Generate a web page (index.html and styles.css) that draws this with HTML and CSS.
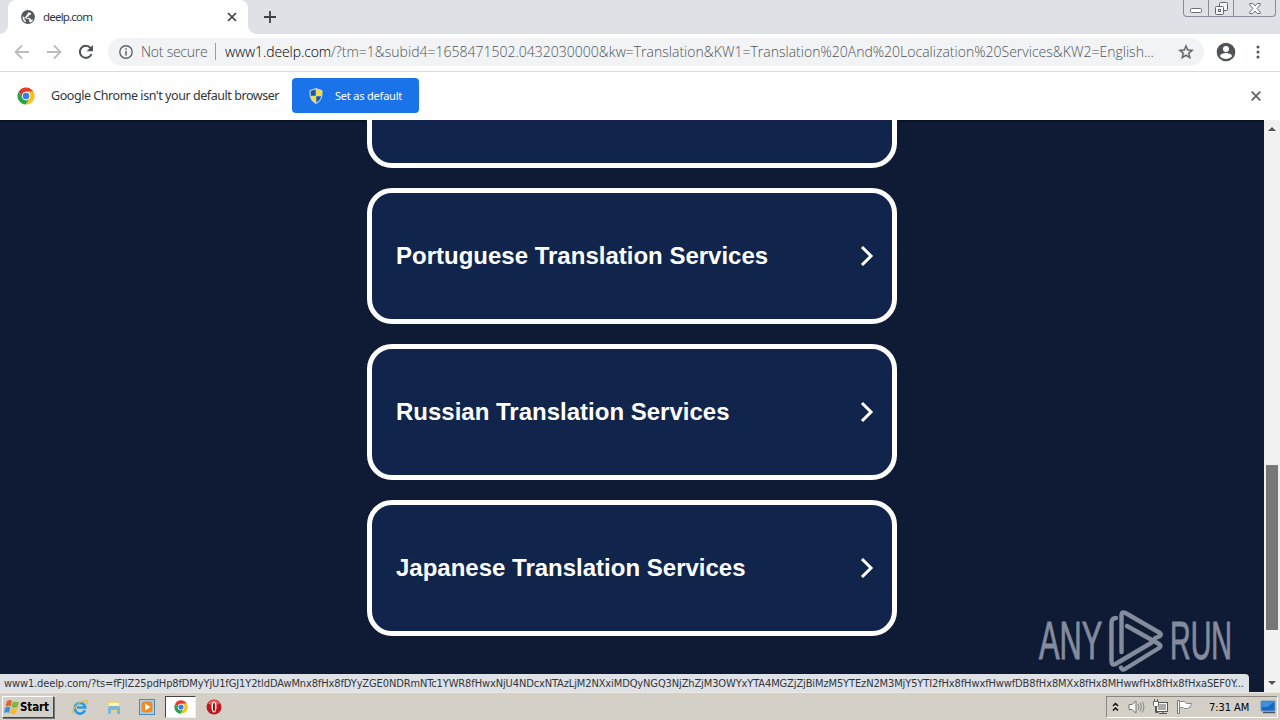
FILE: index.html
```html
<!DOCTYPE html>
<html lang="en">
<head>
    <meta charset="UTF-8">
    <meta name="viewport" content="width=device-width, initial-scale=1.0">
    <title>deelp.com</title>
    <link rel="stylesheet" href="styles.css">
</head>
<body>
<svg class="defs" width="0" height="0">
    <symbol id="chrome" viewBox="0 0 20 20">
        <circle cx="10" cy="10" r="9.5" fill="#fff"/>
        <path fill="#e33b2e" d="M1.8 5.2A9.5 9.5 0 0 1 18.3 5.4H10A4.6 4.6 0 0 0 5.8 8.3L5.9 12z"/>
        <path fill="#fbc116" d="M18.3 5.4A9.5 9.5 0 0 1 9.6 19.5L14 12.3A4.6 4.6 0 0 0 12.2 5.9V5.4z"/>
        <path fill="#2ba24c" d="M1.8 5.2A9.5 9.5 0 0 0 9.6 19.5L13.5 13A4.6 4.6 0 0 1 6 12.3z"/>
        <circle cx="10" cy="10" r="4.6" fill="#fff"/>
        <circle cx="10" cy="10" r="3.7" fill="#3b7de8"/>
    </symbol>
    <symbol id="chevron" viewBox="0 0 14 22">
        <path d="M2 2l9 9-9 9" fill="none" stroke="#fff" stroke-width="3"/>
    </symbol>
</svg>
<div class="tabstrip">
    <div class="tab">
        <svg class="favicon" viewBox="0 0 14 14"><circle cx="7" cy="7" r="6.9" fill="#55595e"/><path fill="#fff" d="M7.6 2.2l2.6 1-.4 1.6-1.8.4-.4 1.4-1.8.3.2 1.1 3.2.3 1 1.4 2-.3c-.5 1.5-1.5 2.5-3 3L8 11.2l.5-1.5L7.2 9 5 8.6 1.8 6.2l-.2 2C2 10.3 3.2 11.7 5 12.3l-.3-1.800-1.500-1.700z"/></svg>
        <span class="tab-title">deelp.com</span>
        <svg class="tab-close" viewBox="0 0 10 10"><path d="M1 1l8 8M9 1L1 9" stroke="#3c4043" stroke-width="1.7"/></svg>
    </div>
    <svg class="new-tab" viewBox="0 0 12 12"><path d="M6 0v12M0 6h12" stroke="#3c4043" stroke-width="1.8"/></svg>
    <div class="window-buttons">
        <span class="win min"><svg width="12" height="5" viewBox="0 0 12 5"><rect x=".5" y=".5" width="11" height="4" rx="1" fill="#fff" stroke="#6b6f78"/></svg></span>
        <span class="win max"><svg width="13" height="13" viewBox="0 0 13 13" fill="#f4f5f8" stroke="#60646e"><rect x="4.5" y=".5" width="8" height="8" rx="1"/><rect x=".5" y="4.5" width="8" height="8" rx="1"/><rect x="3.5" y="7.5" width="2" height="2"/></svg></span>
        <span class="win shut"><svg width="12" height="11" viewBox="0 0 12 11"><path d="M.8.5h3L6 3 8.2.5h3V2L8 5.5 11.200 9v1.500h-3L6 8l-2.200 2.500h-3V9L4 5.500.8 2z" fill="#fff" stroke="#6b6f78"/></svg></span>
    </div>
</div>
<div class="toolbar">
    <svg class="nav" viewBox="0 0 16 16"><path d="M15 8H2M8 1.5L1.5 8 8 14.5" fill="none" stroke="#babcbe" stroke-width="1.8"/></svg>
    <svg class="nav" viewBox="0 0 16 16"><path d="M1 8h13M8 1.5L14.5 8 8 14.5" fill="none" stroke="#babcbe" stroke-width="1.8"/></svg>
    <svg class="nav" viewBox="0 0 16 16"><path d="M13.5 10A6 6 0 1 1 12.5 4L14 5.8" fill="none" stroke="#505357" stroke-width="2"/><path d="M15 1v6.3H8.7z" fill="#505357"/></svg>
    <div class="omnibox">
        <svg class="info" viewBox="0 0 14 14"><circle cx="7" cy="7" r="6.2" fill="none" stroke="#5f6368" stroke-width="1.4"/><path d="M7 6v4.5M7 3.3v1.5" stroke="#5f6368" stroke-width="1.5"/></svg>
        <span class="secure">Not secure</span>
        <span class="url"><b>www1.deelp.com</b>/?tm=1&amp;subid4=1658471502.0432030000&amp;kw=Translation&amp;KW1=Translation%20And%20Localization%20Services&amp;KW2=English...</span>
        <svg class="star" viewBox="0 0 24 24"><path fill="#5f6368" stroke="#5f6368" stroke-width=".5" d="M22 9.240l-7.190-.62L12 2 9.190 8.630 2 9.240l5.460 4.730L5.820 21 12 17.270 18.180 21l-1.630-7.030L22 9.240zM12 15.400l-3.760 2.270 1-4.280-3.320-2.880 4.380-.38L12 6.100l1.710 4.040 4.380.38-3.320 2.880 1 4.280L12 15.400z"/></svg>
    </div>
    <svg class="avatar" viewBox="0 0 20 20"><circle cx="10" cy="10" r="9.3" fill="#505357"/><circle cx="10" cy="7" r="3" fill="#fff"/><path d="M4 14.200c0-2 4-3.200 6-3.200s6 1.200 6 3.200c-3 3.600-9 3.600-12 0z" fill="#fff"/></svg>
    <svg class="dots" viewBox="0 0 4 14" fill="#505357"><circle cx="2" cy="2" r="1.5"/><circle cx="2" cy="7" r="1.5"/><circle cx="2" cy="12" r="1.5"/></svg>
</div>
<div class="infobar">
    <svg class="chrome-logo"><use href="#chrome"/></svg>
    <span class="info-text">Google Chrome isn't your default browser</span>
    <div class="default-button">
        <svg class="shield" viewBox="0 0 14 16"><path d="M7 0l6.500 2.200C14 9 12 13.500 7 16 2 13.500 0 9 .5 2.200z" fill="#c5d3dc"/><path d="M6.700 1.500v6.200H1.800L1.600 3z" fill="#1559a8"/><path d="M7.300 1.500L12.400 3l-.2 4.700H7.300zM1.900 8.300h4.800v6.200C3.800 13 2.400 11 1.900 8.300z" fill="#f9dc35"/><path d="M7.300 8.300h4.800c-.5 2.700-2 4.700-4.800 6.200z" fill="#1559a8"/></svg>
        <span class="set-text">Set as default</span>
    </div>
    <svg class="info-close" viewBox="0 0 10 10"><path d="M.7.7l8.600 8.600M9.300.7L.7 9.300" stroke="#5f6368" stroke-width="1.8"/></svg>
</div>
<div class="viewport">
    <div class="page">
        <div class="card first"></div>
        <div class="card"><span>Portuguese Translation Services</span><svg class="arrow"><use href="#chevron"/></svg></div>
        <div class="card"><span>Russian Translation Services</span><svg class="arrow"><use href="#chevron"/></svg></div>
        <div class="card"><span>Japanese Translation Services</span><svg class="arrow"><use href="#chevron"/></svg></div>
    </div>
    <div class="scrollbar">
        <svg width="8" height="4" viewBox="0 0 8 4"><path d="M0 4l4-4 4 4z" fill="#505050"/></svg>
        <div class="thumb"></div>
        <svg width="8" height="4" viewBox="0 0 8 4"><path d="M0 0l4 4 4-4z" fill="#505050"/></svg>
    </div>
    <div class="watermark">
        <span>ANY</span>
        <svg viewBox="0 0 54 62" fill="none" stroke="#848b9d" stroke-width="4.4" stroke-linejoin="round" stroke-linecap="round"><path d="M7 8Q2.500 8 2.500 13v38q0 5 4 3L42 33"/><path d="M12.500 42V5q0-4 4-2L51 23q2 2-1 3.500l-4 1.800"/><path d="M18 16l32 18q3 2 0 4L16 59q-3 1.500-4-1.500"/></svg>
        <span class="run">RUN</span>
    </div>
    <div class="status">www1.deelp.com/?ts=fFJlZ25pdHp8fDMyYjU1fGJ1Y2tldDAwMnx8fHx8fDYyZGE0NDRmNTc1YWR8fHwxNjU4NDcxNTAzLjM2NXxiMDQyNGQ3NjZhZjM3OWYxYTA4MGZjZjBiMzM5YTEzN2M3MjY5YTI2fHx8fHwxfHwwfDB8fHx8MXx8fHx8MHwwfHx8fHx8fHxaSEF0Y...</div>
</div>
<div class="taskbar">
    <div class="start">
        <svg width="16" height="16" viewBox="0 0 16 16"><path d="M3 2q3-2 5 0L6.500 7.500q-2-1.500-5 0z" fill="#e8602c"/><path d="M9 2.500q3 1.500 6 0L13.500 8q-3 1.500-6 0z" fill="#75b843"/><path d="M1.200 8.500q3-1.500 5 0L5 14q-2-1.500-5 0z" fill="#3f8edb"/><path d="M7.200 9q3 1.500 6 0L12 14.500q-3 1.500-6 0z" fill="#f6bd2b"/></svg>
        <span>Start</span>
    </div>
    <div class="quick">
        <svg class="task-icon" viewBox="0 0 16 16"><path d="M13 11.200A5.300 5.300 0 1 1 13.300 8.500H5" fill="none" stroke="#2b9be0" stroke-width="2.6"/><path d="M1.500 14.500C-1 12 5 4 11 2c4-1.500 5 0 3.500 3" fill="none" stroke="#e8bb41" stroke-width="1.3"/></svg>
        <svg class="task-icon" viewBox="0 0 16 16"><path d="M1 2h5l1 1h7v10H1z" fill="#efd475"/><path d="M3 4h10v4H3z" fill="#fff4bd"/><path d="M2 15V9q0-2 2-2h8q2 0 2 2v6h-3v-4H5v4z" fill="#77b8dc"/></svg>
        <svg class="task-icon" viewBox="0 0 16 16"><rect x=".5" y=".5" width="15" height="15" fill="#a9cfed" stroke="#4c88b9"/><rect x="2.5" y="2.5" width="11" height="11" rx="3" fill="#f08b22"/><path d="M6 4.500l5.500 3.500L6 11.500z" fill="#fff"/></svg>
    </div>
    <div class="active-task"><svg width="14" height="14"><use href="#chrome"/></svg></div>
    <svg class="opera" viewBox="0 0 16 16"><circle cx="8" cy="8" r="7.5" fill="#bd1820"/><path d="M2 4.500a7 7 0 0 1 12 0Q8 8 2 4.500z" fill="#e26061"/><ellipse cx="8" cy="8" rx="2.5" ry="5.5" fill="#fff"/><ellipse cx="8" cy="8" rx="1.1" ry="4.6" fill="#981017"/></svg>
    <div class="tray">
        <svg width="7" height="10" viewBox="0 0 7 10"><path d="M1 4l2.500-2.500L6 4M1 8.500L3.500 6 6 8.500" fill="none" stroke="#111" stroke-width="1.5"/></svg>
        <svg class="speaker" viewBox="0 0 18 16"><path d="M1 5.500h3L8 2v12l-4-3.500H1z" fill="#f8f8f8" stroke="#777"/><path d="M10 5q2 3 0 6M12 3.500q3 4.500 0 9M14.500 2.500q3 5.500 0 11" fill="none" stroke="#888"/></svg>
        <svg class="network" viewBox="0 0 17 16"><rect x="4.5" y="3.5" width="11" height="9" fill="#fff" stroke="#555"/><path d="M6 5h8v6H6z" fill="#aaa"/><path d="M7 14.500h8M11 12v2M3.500 8v5.500h3" fill="none" stroke="#555"/><path d="M1.500 2.500h5v4l-1 1h-3l-1-1zM2.500 0v2M5.500 0v2" fill="#fff" stroke="#666"/></svg>
        <svg class="flag" viewBox="0 0 17 16"><path d="M1.500 1.500h2v13h-2z" fill="#fff" stroke="#777"/><path d="M3.500 2.500h5l2 2h5q-1 5-4 5H8l-1-1H3.500z" fill="#fff" stroke="#888"/></svg>
        <span class="clock">7:31 AM</span>
        <svg class="monitor" viewBox="0 0 16 14"><path d="M1 1h14v10H1z" fill="#1768c1" stroke="#759dc2"/><path d="M2 2h12L7 7H2z" fill="#3e93df"/><path d="M3 12.500h12" stroke="#49515b" stroke-width="1.5"/></svg>
    </div>
</div>
</body>
</html>
```
FILE: styles.css
```css
* {
    box-sizing: border-box;
}

body {
    margin: 0;
    width: 1280px;
    height: 720px;
    overflow: hidden;
    display: flex;
    flex-direction: column;
    background: #fff;
    font-family: "DejaVu Sans Condensed", "DejaVu Sans", sans-serif;
    color: #333639;
}

svg {
    display: block;
    flex: none;
}

.defs {
    position: absolute;
}

span {
    white-space: nowrap;
}

.tabstrip {
    height: 34px;
    flex: none;
    display: flex;
    background: #dee1e6;
    padding-left: 8px;
}

.tab {
    width: 240px;
    background: #fff;
    border-radius: 8px 8px 0 0;
    display: flex;
    align-items: center;
    padding: 0 11px 0 13px;
    position: relative;
}

.tab::before,
.tab::after {
    content: "";
    position: absolute;
    bottom: 0;
    width: 8px;
    height: 8px;
}

.tab::before {
    left: -8px;
    background: radial-gradient(circle at 0 0, transparent 7.5px, #fff 8px);
}

.tab::after {
    right: -8px;
    background: radial-gradient(circle at 100% 0, transparent 7.5px, #fff 8px);
}

.favicon {
    width: 14px;
    height: 14px;
    margin-right: 8px;
}

.tab-title {
    font: 11.5px/16px "Noto Sans", sans-serif;
    letter-spacing: -.8px;
    padding-bottom: 1px;
}

.tab-close {
    width: 10px;
    height: 10px;
    margin-left: auto;
}

.new-tab {
    width: 12px;
    height: 12px;
    margin: 11px 0 0 16px;
}

.window-buttons {
    width: 93px;
    height: 17px;
    margin-left: auto;
    margin-right: 4px;
    display: flex;
    border: 1px solid #888c96;
    border-top: 0;
    border-radius: 0 0 4px 4px;
}

.win {
    width: 25px;
    display: flex;
    align-items: center;
    justify-content: center;
    border-right: 1px solid #888c96;
}

.min {
    padding-top: 5px;
}

.shut {
    flex: 1;
    border: 0;
}

.toolbar {
    height: 38px;
    flex: none;
    display: flex;
    align-items: center;
    border-bottom: 1px solid #d9dadc;
    padding: 0 20px 2px 14px;
}

.nav {
    width: 16px;
    height: 16px;
    margin-right: 16px;
}

.omnibox {
    width: 1096px;
    height: 28px;
    margin-left: -2px;
    padding: 0 9px 0 11px;
    border-radius: 14px;
    background: #f1f3f4;
    display: flex;
    align-items: center;
}

.info {
    width: 14px;
    height: 14px;
    margin-right: 8px;
}

.secure,
.url {
    font: 300 14px "Open Sans", sans-serif;
    color: #4f5358;
}

.secure {
    width: 75px;
    height: 17px;
    line-height: 17px;
    border-right: 1px solid #999da1;
    letter-spacing: -.25px;
}

.url {
    margin-left: 9px;
    letter-spacing: .01px;
}

.url b {
    font-weight: 300;
    color: #000;
    letter-spacing: -.1px;
}

.star {
    width: 18px;
    height: 18px;
    margin-left: auto;
}

.avatar {
    width: 20px;
    height: 20px;
    margin-left: 12px;
}

.dots {
    width: 4px;
    height: 14px;
    margin-left: auto;
}

.infobar {
    height: 48px;
    flex: none;
    display: flex;
    align-items: center;
    padding: 0 19px 1px 17px;
}

.chrome-logo {
    width: 18px;
    height: 18px;
}

.info-text {
    width: 241px;
    padding-left: 16px;
    font: 12.5px "Noto Sans", sans-serif;
    letter-spacing: -.44px;
}

.default-button {
    width: 127px;
    height: 35px;
    margin-left: 16px;
    padding-left: 17px;
    background: #1a73e8;
    border-radius: 4px;
    color: #fff;
    display: flex;
    align-items: center;
}

.shield {
    width: 14px;
    height: 16px;
    margin-right: 12px;
}

.set-text {
    font: 11px "Noto Sans", sans-serif;
    letter-spacing: -.2px;
}

.info-close {
    width: 10px;
    height: 10px;
    margin-left: auto;
}

.viewport {
    height: 572px;
    flex: none;
    display: flex;
    position: relative;
    background: linear-gradient(#071022, #0f1b34 3px);
}

.page {
    width: 1264px;
    display: flex;
    flex-direction: column;
    align-items: center;
    gap: 20px;
    overflow: hidden;
}

.card {
    width: 530px;
    height: 136px;
    flex: none;
    border: 5px solid #fff;
    border-radius: 25px;
    background: #11254c;
    display: flex;
    align-items: center;
    justify-content: space-between;
    padding: 0 18px 0 24px;
    color: #fff;
    font: bold 24px "Liberation Sans", Arial, sans-serif;
}

.first {
    margin-top: -88px;
}

.arrow {
    width: 14px;
    height: 22px;
}

.scrollbar {
    width: 16px;
    background: #f1f1f1;
    display: flex;
    flex-direction: column;
    align-items: center;
    padding: 7px 0;
}

.thumb {
    width: 12px;
    height: 165px;
    margin-top: auto;
    margin-bottom: 51px;
    background: #777;
}

.watermark {
    position: absolute;
    left: 1039px;
    top: 490px;
    display: flex;
    align-items: center;
    gap: 7px;
    color: #848b9d;
    font: 53px/62px "Liberation Sans", sans-serif;
    -webkit-text-stroke: 1px #848b9d;
}

.watermark span {
    width: 63px;
    transform: scaleX(.58);
    transform-origin: left;
}

.watermark .run {
    transform: scaleX(.54);
}

.watermark svg {
    width: 54px;
    height: 62px;
}

.status {
    position: absolute;
    left: 0;
    bottom: 0;
    width: 1249px;
    height: 18px;
    padding-left: 4px;
    background: #dee1e6;
    border-radius: 0 4px 0 0;
    overflow: hidden;
    white-space: nowrap;
    font-size: 11px;
    line-height: 19px;
    letter-spacing: -.12px;
}

.taskbar {
    height: 28px;
    flex: none;
    display: flex;
    align-items: center;
    background: #d4d0c8;
    border-top: 1px solid #ece9e3;
    padding: 1px 2px 0;
    color: #000;
}

.start {
    width: 52px;
    height: 22px;
    display: flex;
    align-items: center;
    padding-left: 1px;
    border: 1px solid;
    border-color: #fff #444 #444 #fff;
    box-shadow: 1px 1px #777;
    font: bold 11.5px "DejaVu Sans Condensed", sans-serif;
    letter-spacing: -.1px;
}

.quick {
    display: flex;
    gap: 17.5px;
    margin-left: 18px;
}

.task-icon,
.opera {
    width: 16px;
    height: 16px;
}

.active-task {
    width: 31px;
    height: 22px;
    margin-left: 10px;
    background: #fff;
    border: 1px solid;
    border-color: #444 #eee #eee #444;
    display: flex;
    align-items: center;
    justify-content: center;
}

.opera {
    margin-left: 10px;
}

.tray {
    width: 172px;
    height: 22px;
    margin-left: auto;
    border: 1px solid;
    border-color: #8a8780 #fff #fff #8a8780;
    display: flex;
    align-items: center;
    padding: 0 1px 0 5px;
}

.speaker {
    width: 18px;
    height: 16px;
    margin-left: 9px;
}

.network {
    width: 17px;
    height: 16px;
    margin-left: 6px;
}

.flag {
    width: 17px;
    height: 16px;
    margin-left: 7px;
}

.clock {
    width: 43px;
    margin-left: 16px;
    font-size: 11px;
    letter-spacing: -.05px;
}

.monitor {
    width: 16px;
    height: 14px;
    margin-left: auto;
}
```
